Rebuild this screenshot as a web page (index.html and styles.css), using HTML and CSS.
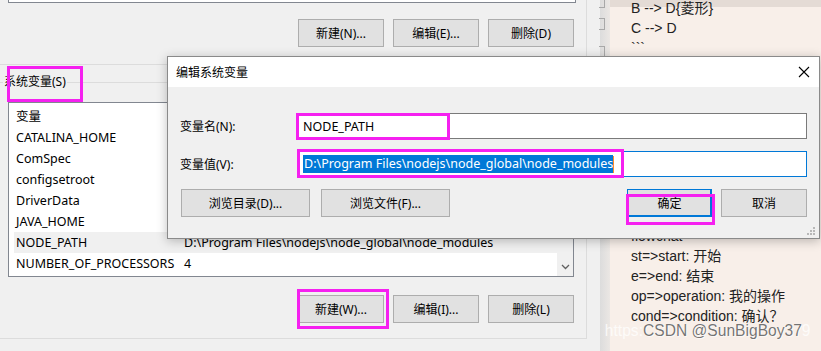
FILE: index.html
```html
<!DOCTYPE html>
<html lang="zh-CN">
<head>
  <meta charset="UTF-8">
  <title>编辑系统变量</title>
  <link rel="stylesheet" href="styles.css">
</head>
<body>
  <div class="screen">
    <div class="envwin">
      <div class="group group-user">
        <div class="list-tail"></div>
        <div class="btn-row">
          <button class="btn">新建(N)...</button>
          <button class="btn">编辑(E)...</button>
          <button class="btn">删除(D)</button>
        </div>
      </div>

      <div class="group group-sys">
        <div class="legend">系统变量(S)</div>
        <div class="varlist">
          <div class="rows">
            <div class="vrow head"><span class="c1">变量</span></div>
            <div class="vrow"><span class="c1">CATALINA_HOME</span></div>
            <div class="vrow"><span class="c1">ComSpec</span></div>
            <div class="vrow"><span class="c1">configsetroot</span></div>
            <div class="vrow"><span class="c1">DriverData</span></div>
            <div class="vrow"><span class="c1">JAVA_HOME</span></div>
            <div class="vrow sel"><span class="c1">NODE_PATH</span><span class="c2">D:\Program Files\nodejs\node_global\node_modules</span></div>
            <div class="vrow"><span class="c1">NUMBER_OF_PROCESSORS</span><span class="c2">4</span></div>
          </div>
          <div class="vscroll">
            <svg width="9" height="6" viewBox="0 0 9 6"><path d="M1 1 L4.5 4.5 L8 1" fill="none" stroke="#606060" stroke-width="1.3"/></svg>
          </div>
        </div>
        <div class="btn-row">
          <button class="btn">新建(W)...</button>
          <button class="btn">编辑(I)...</button>
          <button class="btn">删除(L)</button>
        </div>
      </div>
    </div>

    <div class="strip">
      <span class="tick t1"></span>
      <span class="tick t2"></span>
      <span class="tick t3"></span>
    </div>

    <div class="editor">
      <div class="md md-top">
        <div class="line">B --&gt; D{菱形}</div>
        <div class="line">C --&gt; D</div>
        <div class="line">```</div>
      </div>
      <div class="md md-bottom">
        <div class="line">flowchat</div>
        <div class="line">st=&gt;start: 开始</div>
        <div class="line">e=&gt;end: 结束</div>
        <div class="line">op=&gt;operation: 我的操作</div>
        <div class="line">cond=&gt;condition: 确认？</div>
      </div>
    </div>
  </div>

  <div class="dialog">
    <div class="dlg-title">
      <span>编辑系统变量</span>
      <svg class="dlg-close" width="12" height="12" viewBox="0 0 12 12"><path d="M1 1 L11 11 M11 1 L1 11" stroke="#000" stroke-width="1.1"/></svg>
    </div>
    <div class="dlg-body">
      <div class="field">
        <label>变量名(N):</label>
        <div class="input">NODE_PATH</div>
      </div>
      <div class="field">
        <label>变量值(V):</label>
        <div class="input focus"><span class="selected">D:\Program Files\nodejs\node_global\node_modules</span><span class="caret"></span></div>
      </div>
      <div class="dlg-buttons">
        <button class="btn wide">浏览目录(D)...</button>
        <button class="btn wide">浏览文件(F)...</button>
        <span class="spacer"></span>
        <button class="btn default">确定</button>
        <button class="btn">取消</button>
      </div>
    </div>
    <svg class="grip" width="8" height="8" viewBox="0 0 8 8">
      <rect x="6" y="0" width="2" height="2" fill="#b8b8b8"/>
      <rect x="3" y="3" width="2" height="2" fill="#b8b8b8"/>
      <rect x="6" y="3" width="2" height="2" fill="#b8b8b8"/>
      <rect x="0" y="6" width="2" height="2" fill="#b8b8b8"/>
      <rect x="3" y="6" width="2" height="2" fill="#b8b8b8"/>
      <rect x="6" y="6" width="2" height="2" fill="#b8b8b8"/>
    </svg>
  </div>

  <div class="watermark"><span class="ghost">https:</span>CSDN @SunBigBoy37<span class="faint">9</span></div>

  <div class="mark mark-legend"></div>
  <div class="mark mark-name"></div>
  <div class="mark mark-value"></div>
  <div class="mark mark-ok"></div>
  <div class="mark mark-new"></div>
</body>
</html>
```

FILE: styles.css
```css
body {
  margin: 0;
  width: 821px;
  height: 351px;
  overflow: hidden;
  position: relative;
  font-family: "Segoe UI", "Noto Sans", "Noto Sans CJK SC", sans-serif;
  font-size: 12.5px;
  color: #000;
}
.screen {
  display: flex;
  height: 351px;
}
.envwin {
  width: 590px;
  flex: none;
  background: #f0f0f0;
}
.group {
  width: 586px;
  border-right: 1px solid #dcdcdc;
  border-bottom: 1px solid #dcdcdc;
}
.group-user {
  height: 64px;
}
.list-tail {
  margin-left: 8px;
  width: 566px;
  height: 2px;
  border: 1px solid #828790;
  border-top: none;
  background: #fff;
}
.btn-row {
  display: flex;
  justify-content: flex-end;
  gap: 9px;
  padding-right: 12px;
  margin-top: 16px;
}
.btn {
  width: 86px;
  height: 28px;
  padding: 0;
  border: 1px solid #adadad;
  background: #e1e1e1;
  font: inherit;
  font-size: 12px;
  color: #000;
}
.group-sys {
  margin-top: 17px;
  height: 255px;
  border-top: 1px solid #dcdcdc;
}
.legend {
  width: fit-content;
  margin: -9px 0 0 3px;
  padding: 0 1px;
  line-height: 16px;
  font-size: 12px;
  background: #f0f0f0;
}
.varlist {
  display: flex;
  margin: 12px 0 0 8px;
  width: 564px;
  height: 173px;
  border: 1px solid #828790;
  background: #fff;
}
.rows {
  flex: 1;
  overflow: hidden;
}
.vrow {
  display: flex;
  height: 21px;
  align-items: center;
  margin-left: 5px;
  padding-left: 2px;
  white-space: nowrap;
}
.vrow.head {
  height: 24px;
}
.vrow.sel {
  background: #f0f0f0;
}
.c1 {
  width: 168px;
  flex: none;
}
.vscroll {
  width: 16px;
  background: #f0f0f0;
  display: flex;
  align-items: flex-end;
  justify-content: center;
  padding-bottom: 6px;
  box-sizing: border-box;
}
.group-sys .btn-row {
  margin-top: 18px;
}
.strip {
  width: 20px;
  flex: none;
  display: flex;
  flex-direction: column;
  background: linear-gradient(to right, #f0f0f0 0, #f0f0f0 10px, #dcdcdc 10px, #ebe7e4 20px);
}
.tick {
  width: 5px;
  margin-left: 9px;
  border: 1px solid #a8a8a8;
  border-left: none;
}
.t1 { height: 7px; margin-top: -1px; }
.t2 { height: 10px; margin-top: 10px; }
.t3 { height: 10px; margin-top: 16px; }
.editor {
  flex: 1;
  background: linear-gradient(to bottom, #e4dbd5 0, #e4dbd5 7px, #f8efe9 7px);
  font-family: "Liberation Sans", "Noto Sans CJK SC", sans-serif;
  font-size: 14px;
  color: #222;
}
.md {
  padding-left: 21px;
}
.md-top {
  margin-top: -2px;
}
.md-bottom {
  margin-top: 168px;
}
.line {
  height: 20px;
  line-height: 20px;
  white-space: nowrap;
}

/* dialog */
.dialog {
  position: absolute;
  left: 167px;
  top: 56px;
  width: 653px;
  height: 183px;
  box-sizing: border-box;
  border: 1px solid #8a8a8a;
  background: #f0f0f0;
  box-shadow: 0 2px 10px rgba(0, 0, 0, 0.25);
}
.dlg-title {
  display: flex;
  align-items: center;
  justify-content: space-between;
  height: 30px;
  padding: 0 9px 0 8px;
  background: #fff;
  font-size: 12px;
}
.dlg-close {
  margin-top: -1px;
}
.dlg-body {
  padding: 26px 12px 0 9px;
}
.field {
  display: flex;
  align-items: center;
  margin-bottom: 12px;
}
.field label {
  width: 120px;
  flex: none;
  font-size: 12px;
  padding-left: 3px;
  box-sizing: border-box;
}
.input {
  width: 510px;
  height: 26px;
  box-sizing: border-box;
  border: 1px solid #7a7a7a;
  background: #fff;
  padding-left: 5px;
  display: flex;
  align-items: center;
  white-space: nowrap;
}
.input.focus {
  border-color: #0078d7;
}
.selected {
  background: #0078d7;
  color: #fff;
  line-height: 18px;
  padding-left: 1px;
}
.caret {
  width: 1px;
  height: 17px;
  background: #ff8c28;
}
.dlg-buttons {
  display: flex;
  gap: 9px;
  margin-top: 5px;
  padding-left: 4px;
}
.btn.wide {
  width: 129px;
}
.btn.wide + .btn.wide {
  margin-left: 2px;
}
.spacer {
  flex: 1;
}
.btn.default {
  border-color: #0078d7;
  box-shadow: inset -1px -1px 0 #0078d7;
  width: 85px;
}
.grip {
  position: absolute;
  right: 4px;
  bottom: 3px;
}

.watermark {
  position: absolute;
  left: 643px;
  top: 322px;
  font-family: "Liberation Sans", sans-serif;
  font-size: 15.6px;
  line-height: 18px;
  color: rgba(70, 70, 70, 0.75);
  text-shadow: 0 0 1px #fff, 1px 1px 0 rgba(255, 255, 255, 0.6);
  white-space: nowrap;
}
.ghost {
  position: absolute;
  right: 100%;
  color: rgba(255, 255, 255, 0.75);
  text-shadow: none;
}
.faint {
  color: rgba(255, 255, 255, 0.75);
  text-shadow: none;
}

/* annotation boxes */
.mark {
  position: absolute;
  border: 3px solid #f520f0;
  box-sizing: border-box;
}
.mark-legend { left: 7px; top: 66px; width: 76px; height: 36px; }
.mark-name { left: 296px; top: 113px; width: 154px; height: 27px; }
.mark-value { left: 297px; top: 149px; width: 327px; height: 29px; }
.mark-ok { left: 626px; top: 194px; width: 89px; height: 31px; }
.mark-new { left: 297px; top: 289px; width: 92px; height: 40px; }
```
